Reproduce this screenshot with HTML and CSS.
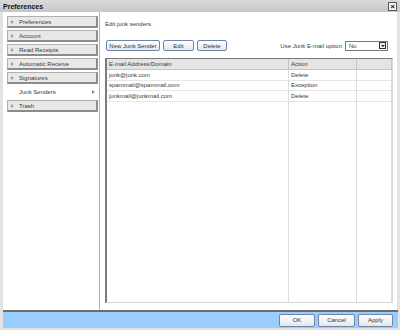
FILE: index.html
```html
<!DOCTYPE html>
<html lang="en">
<head>
    <meta charset="UTF-8">
    <title>Preferences</title>
    <link rel="stylesheet" href="styles.css">
</head>
<body>
    <div class="window">
        <div class="titlebar">
            <span>Preferences</span>
            <span class="close">&times;</span>
        </div>

        <div class="main">
            <div class="nav">
                <div class="nav-item"><i class="tri"></i>Preferences</div>
                <div class="nav-item"><i class="tri"></i>Account</div>
                <div class="nav-item"><i class="tri"></i>Read Receipts</div>
                <div class="nav-item"><i class="tri"></i>Automatic Receive</div>
                <div class="nav-item"><i class="tri"></i>Signatures</div>
                <div class="nav-item selected">Junk Senders<i class="tri"></i></div>
                <div class="nav-item"><i class="tri"></i>Trash</div>
            </div>

            <div class="content">
                <div class="intro">Edit junk senders.</div>

                <div class="toolbar">
                    <div class="actions">
                        <button class="btn btn-new">New Junk Sender</button>
                        <button class="btn btn-edit">Edit</button>
                        <button class="btn btn-delete">Delete</button>
                    </div>
                    <div class="option">
                        <span>Use Junk E-mail option</span>
                        <div class="select">No<span class="drop"><i class="down"></i></span></div>
                    </div>
                </div>

                <div class="list">
                    <div class="cell head">E-mail Address/Domain</div>
                    <div class="cell head">Action</div>
                    <div class="cell head"></div>

                    <div class="cell">junk@junk.com</div>
                    <div class="cell">Delete</div>
                    <div class="cell"></div>

                    <div class="cell">spammail@spammail.com</div>
                    <div class="cell">Exception</div>
                    <div class="cell"></div>

                    <div class="cell">junkmail@junkmail.com</div>
                    <div class="cell">Delete</div>
                    <div class="cell"></div>

                    <div class="cell filler"></div>
                    <div class="cell filler"></div>
                    <div class="cell filler"></div>
                </div>
            </div>
        </div>

        <div class="footer">
            <button class="btn btn-ok">OK</button>
            <button class="btn btn-cancel">Cancel</button>
            <button class="btn btn-apply">Apply</button>
        </div>
    </div>
</body>
</html>
```

FILE: styles.css
```css
* { box-sizing: border-box; }
body {
    margin: 0;
    font-family: "Liberation Sans", Arial, sans-serif;
    font-size: 6px;
    color: #3a3a3a;
}
.window {
    width: 400px;
    height: 330px;
    display: flex;
    flex-direction: column;
    background: #e3e3e3;
    padding-bottom: 2px;
}
.titlebar {
    height: 12px;
    flex: none;
    display: flex;
    align-items: center;
    justify-content: space-between;
    padding: 0 3px 0 3px;
    background: linear-gradient(#dadada, #c6c6c6);
    font-size: 7px;
    font-weight: bold;
    color: #111;
}
.close {
    width: 9px;
    height: 9px;
    border: 1px solid #555;
    background: #f6f6f6;
    font-size: 8px;
    line-height: 7px;
    text-align: center;
    font-weight: bold;
}
.main {
    flex: 1;
    display: flex;
    margin: 0 3px;
    background: #fff;
    min-height: 0;
}
.nav {
    width: 97px;
    flex: none;
    border-right: 1px solid #b4b4b4;
    padding: 4px 1px 0 4px;
}
.nav-item {
    height: 12px;
    margin-bottom: 2px;
    display: flex;
    align-items: center;
    padding-left: 3px;
    background: #e8e8e8;
    border: 1px solid #b0b0b0;
    border-right: 2px solid #8c8c8c;
    border-bottom: 2px solid #8c8c8c;
}
.tri {
    width: 0;
    height: 0;
    border-left: 3px solid #a0a0a0;
    border-top: 2px solid transparent;
    border-bottom: 2px solid transparent;
    margin-right: 5px;
}
.nav-item.selected {
    background: #fff;
    border-color: #fff;
    justify-content: space-between;
    padding-left: 11px;
    padding-right: 1px;
}
.nav-item.selected .tri {
    border-left-color: #888;
    margin-right: 0;
}
.content {
    flex: 1;
    display: flex;
    flex-direction: column;
    padding: 9px 4px 7px 5px;
    min-width: 0;
}
.intro {
    line-height: 7px;
}
.toolbar {
    display: flex;
    justify-content: space-between;
    align-items: center;
    margin-top: 12px;
}
.actions {
    display: flex;
    gap: 3px;
    margin-left: 1px;
}
.btn {
    height: 11px;
    padding: 0;
    border: 1px solid #6d86a8;
    border-radius: 2px;
    background: linear-gradient(#ffffff, #e3e8ef);
    font-family: "Liberation Sans", Arial, sans-serif;
    font-size: 6px;
    color: #333;
}
.btn-new { width: 54px; }
.btn-edit { width: 31px; }
.btn-delete { width: 30px; }
.option {
    display: flex;
    align-items: center;
    gap: 3px;
    margin-right: 5px;
}
.select {
    width: 43px;
    height: 10px;
    border: 1px solid #7a7a7a;
    background: #fff;
    display: flex;
    justify-content: space-between;
    align-items: center;
    padding: 0 1px 0 3px;
}
.drop {
    width: 7px;
    height: 7px;
    border: 1px solid #333;
    background: #eef1f6;
    display: flex;
    align-items: center;
    justify-content: center;
}
.down {
    width: 0;
    height: 0;
    border-top: 2px solid #222;
    border-left: 2px solid transparent;
    border-right: 2px solid transparent;
}
.list {
    flex: 1;
    margin-top: 7px;
    display: grid;
    grid-template-columns: 182px 68px 1fr;
    grid-template-rows: 11px 10.5px 10.5px 10.5px 1fr;
    border-left: 2px solid #7c7c7c;
    border-top: 1px solid #7c7c7c;
    border-right: 1px solid #d8d8d8;
    border-bottom: 1px solid #d8d8d8;
}
.cell {
    padding-left: 2px;
    display: flex;
    align-items: center;
    border-right: 1px solid #dcdcdc;
    border-bottom: 1px solid #e6e6e6;
    white-space: nowrap;
}
.cell.head {
    background: #e4e4e4;
    border-right-color: #c4c4c4;
    border-bottom-color: #c4c4c4;
}
.cell.filler {
    border-bottom: none;
}
.footer {
    height: 18px;
    flex: none;
    margin: 0 2px 0 3px;
    border-top: 2px solid #6c6c6c;
    background: #99ccff;
    display: flex;
    justify-content: flex-end;
    align-items: center;
    gap: 3px;
    padding-right: 5px;
}
.footer .btn {
    height: 13px;
}
.btn-ok { width: 36px; }
.btn-cancel { width: 37px; }
.btn-apply { width: 35px; }
```
